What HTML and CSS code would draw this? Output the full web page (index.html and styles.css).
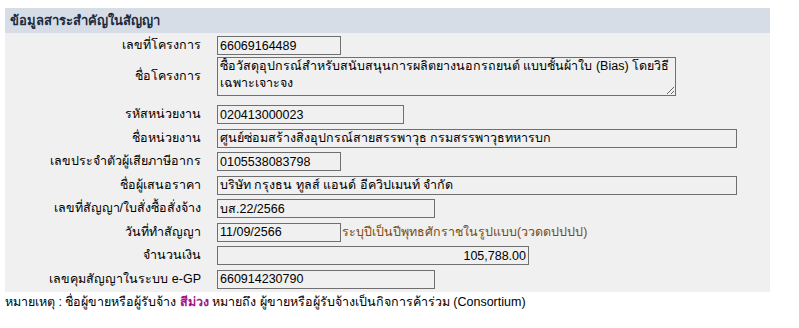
FILE: index.html
```html
<!DOCTYPE html>
<html lang="th">
<head>
  <meta charset="UTF-8" />
  <title>ข้อมูลสาระสำคัญในสัญญา</title>
  <link rel="stylesheet" href="styles.css">
</head>
<body>
<div class="panel">
  <div class="panel-head">ข้อมูลสาระสำคัญในสัญญา</div>
  <div class="form">
    <label>เลขที่โครงการ</label>
    <div class="field"><input class="w-s" type="text" value="66069164489" readonly></div>

    <label class="tall">ชื่อโครงการ</label>
    <div class="field tall"><textarea class="w-ta" readonly>ซื้อวัสดุอุปกรณ์สำหรับสนับสนุนการผลิตยางนอกรถยนต์ แบบชั้นผ้าใบ (Bias) โดยวิธีเฉพาะเจาะจง</textarea></div>

    <label>รหัสหน่วยงาน</label>
    <div class="field"><input class="w-c" type="text" value="020413000023" readonly></div>

    <label>ชื่อหน่วยงาน</label>
    <div class="field"><input class="w-l" type="text" value="ศูนย์ซ่อมสร้างสิ่งอุปกรณ์สายสรรพาวุธ กรมสรรพาวุธทหารบก" readonly></div>

    <label>เลขประจำตัวผู้เสียภาษีอากร</label>
    <div class="field"><input class="w-s" type="text" value="0105538083798" readonly></div>

    <label>ชื่อผู้เสนอราคา</label>
    <div class="field"><input class="w-l" type="text" value="บริษัท กรุงธน ทูลส์ แอนด์ อีควิปเมนท์ จำกัด" readonly></div>

    <label>เลขที่สัญญา/ใบสั่งซื้อสั่งจ้าง</label>
    <div class="field"><input class="w-m" type="text" value="บส.22/2566" readonly></div>

    <label>วันที่ทำสัญญา</label>
    <div class="field"><input class="w-s" type="text" value="11/09/2566" readonly><span class="hint">ระบุปีเป็นปีพุทธศักราชในรูปแบบ(ววดดปปปป)</span></div>

    <label>จำนวนเงิน</label>
    <div class="field"><input class="w-a num" type="text" value="105,788.00" readonly></div>

    <label>เลขคุมสัญญาในระบบ e-GP</label>
    <div class="field"><input class="w-m" type="text" value="660914230790" readonly></div>
  </div>
</div>
<p class="note">หมายเหตุ : ชื่อผู้ขายหรือผู้รับจ้าง <span class="purple">สีม่วง</span> หมายถึง ผู้ขายหรือผู้รับจ้างเป็นกิจการค้าร่วม (Consortium)</p>
</body>
</html>
```

FILE: styles.css
```css
body {
  margin: 0;
  padding: 8px 29px 0 5px;
  font-family: Tahoma, "Liberation Sans", "Noto Sans", sans-serif;
  font-size: 12.5px;
  color: #000;
  background: #fff;
}
.panel {
  width: 765px;
  background: #f0f0f0;
}
.panel-head {
  height: 25px;
  line-height: 25px;
  padding-left: 5px;
  background: #d6dde6;
  color: #1c2b40;
  font-size: 13px;
  font-weight: bold;
}
.form {
  display: grid;
  grid-template-columns: 196px 1fr;
  column-gap: 16px;
  row-gap: 4.5px;
  padding: 3px 0;
  align-items: center;
}
.form label {
  height: 19px;
  line-height: 19px;
  text-align: right;
  white-space: nowrap;
}
.field {
  display: flex;
  align-items: center;
  height: 19px;
}
.form .tall {
  height: 39px;
  line-height: 39px;
  margin-top: -2.5px;
  margin-bottom: 4.5px;
}
input, textarea {
  box-sizing: border-box;
  margin: 0;
  font: inherit;
  color: #000;
  background: #f0f0f0;
  border: 1px solid #6f6f6f;
  border-radius: 0;
  padding: 0 2px;
  outline: none;
}
input {
  height: 19px;
  line-height: 17px;
}
textarea {
  height: 39px;
  line-height: 17px;
  overflow: hidden;
  resize: both;
}
.num {
  text-align: right;
}
.w-s { width: 124px; }
.w-c { width: 187px; }
.w-m { width: 218px; }
.w-a { width: 312px; }
.w-ta { width: 459px; }
.w-l { width: 520px; }
.hint {
  margin-left: 1px;
  color: #7a4b12;
  white-space: nowrap;
}
.note {
  margin: 0;
  padding-top: 1px;
  line-height: 18px;
}
.purple {
  color: #a3158f;
  font-weight: bold;
}
```
